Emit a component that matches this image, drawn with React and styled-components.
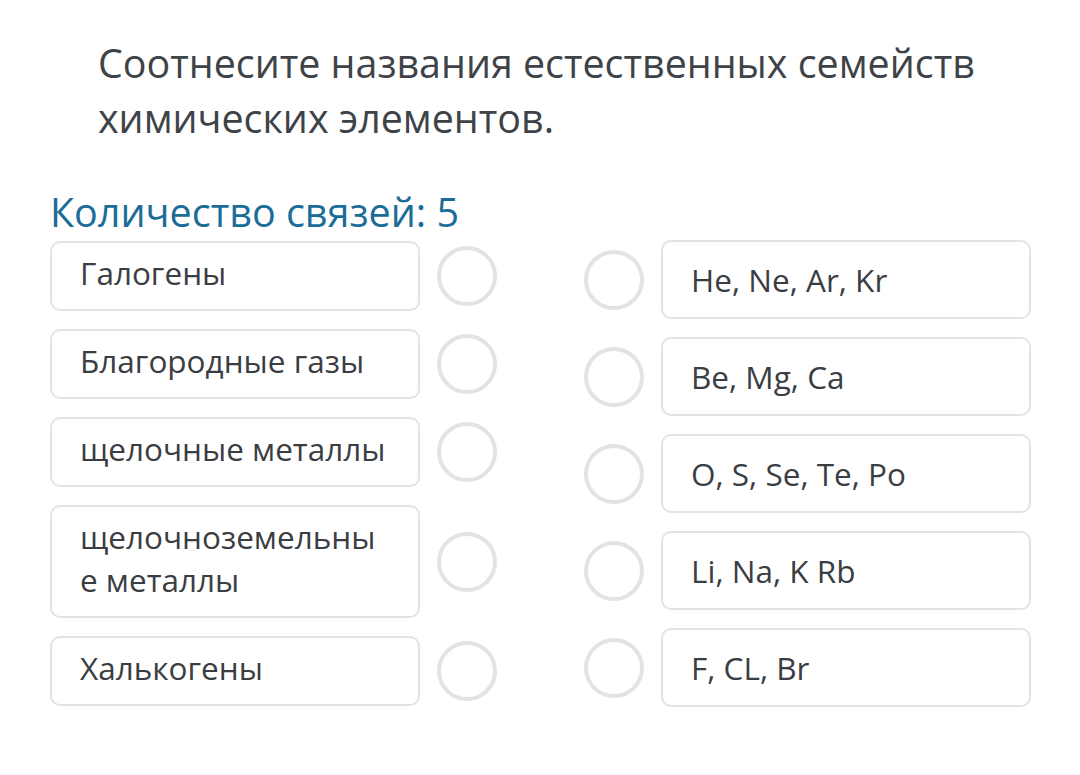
import React from "react";
import styled, { createGlobalStyle } from "styled-components";

const Global = createGlobalStyle`
  html, body { margin: 0; padding: 0; background: #ffffff; }
  body { font-family: "Open Sans", "Noto Sans", sans-serif; }
`;

const Page = styled.div`
  width: 1080px;
  height: 775px;
  box-sizing: border-box;
  padding: 36px 0 0 50px;
  background: #fff;
  overflow: hidden;
`;

const Title = styled.h1`
  margin: 0 0 43px 48px;
  font-weight: 400;
  font-size: 39.4px;
  line-height: 55px;
  color: #3e4348;
  width: 920px;
`;

const Counter = styled.h2`
  margin: 0 0 5px 0;
  font-weight: 400;
  font-size: 39.5px;
  line-height: 46px;
  color: #1b6d98;
`;

const Columns = styled.div`
  display: flex;
  gap: 87px;
  align-items: flex-start;
`;

const Column = styled.div`
  display: flex;
  flex-direction: column;
  gap: 18px;
  padding-top: ${(p) => p.$offset || 0}px;
`;

const Row = styled.div`
  display: flex;
  align-items: center;
  gap: 17px;
`;

const Card = styled.div`
  box-sizing: border-box;
  width: 370px;
  min-height: ${(p) => p.$h}px;
  border: 2px solid #e3e3e3;
  border-radius: 10px;
  background: #fff;
  padding: ${(p) => p.$pt}px 30px ${(p) => p.$pb}px 28px;
  font-size: 31.5px;
  line-height: 43px;
  color: #3a3e43;
  word-break: break-all;
`;

const Dot = styled.div`
  box-sizing: border-box;
  width: 60px;
  height: 60px;
  flex: none;
  border-radius: 50%;
  border: 4px solid #e0e4e7;
  background: #fff;
`;

const left = [
  "Галогены",
  "Благородные газы",
  "щелочные металлы",
  "щелочноземельные металлы",
  "Халькогены",
];

const right = [
  "He, Ne, Ar, Kr",
  "Be, Mg, Ca",
  "O, S, Se, Te, Po",
  "Li, Na, K Rb",
  "F, CL, Br",
];

export default function App() {
  return (
    <Page>
      <Global />
      <Title>Соотнесите названия естественных семейств химических элементов.</Title>
      <Counter>Количество связей: 5</Counter>
      <Columns>
        <Column $offset={1}>
          {left.map((t) => (
            <Row key={t}>
              <Card $h={70} $pt={8} $pb={15}>{t}</Card>
              <Dot />
            </Row>
          ))}
        </Column>
        <Column>
          {right.map((t) => (
            <Row key={t}>
              <Dot />
              <Card $h={79} $pt={16} $pb={16}>{t}</Card>
            </Row>
          ))}
        </Column>
      </Columns>
    </Page>
  );
}
